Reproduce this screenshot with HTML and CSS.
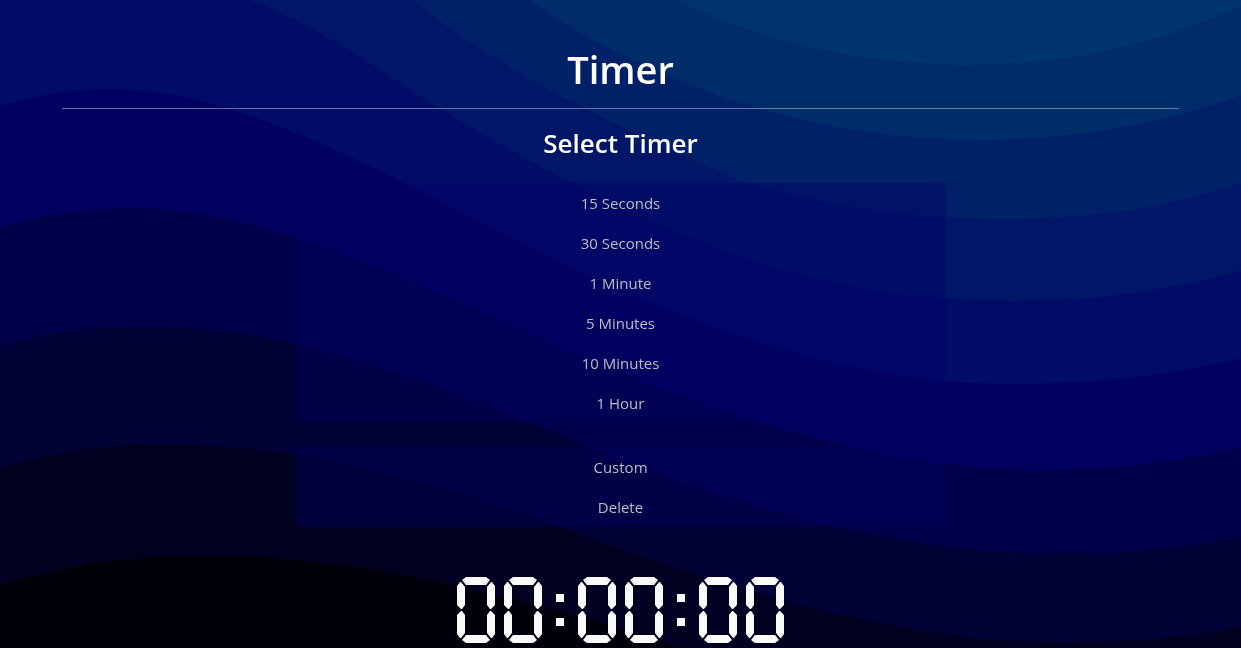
FILE: index.html
```html
<!DOCTYPE html>
<html lang="en">
<head>
<meta charset="utf-8">
<title>Timer</title>
<link rel="stylesheet" href="styles.css">
</head>
<body>
<svg class="waves" viewBox="0 0 1241 648" preserveAspectRatio="none" aria-hidden="true">
  <rect class="wave-0" width="1241" height="648"/>
  <path class="wave-1" d="M0 0H675C770 45 870 65 970 65C1060 65 1150 48 1241 6V648H0Z"/>
  <path class="wave-2" d="M0 0H530C600 50 670 78 740 103C820 128 900 140 980 140C1070 140 1160 125 1241 95V648H0Z"/>
  <path class="wave-3" d="M0 0H412C500 70 620 130 740 180C830 208 920 219 1005 219C1090 219 1170 208 1241 183V648H0Z"/>
  <path class="wave-4" d="M0 0H250C300 20 350 48 410 90C540 172 650 225 740 256C830 287 920 301 1010 301C1090 301 1170 292 1241 270V648H0Z"/>
  <path class="wave-5" d="M0 106C35 96 70 89 110 89C240 89 390 177 500 232C680 325 850 384 1010 384C1090 384 1170 376 1241 358V648H0Z"/>
  <path class="wave-6" d="M0 228C40 215 85 208 130 208C260 208 410 280 540 338C720 418 880 470 1040 470C1110 470 1180 462 1241 447V648H0Z"/>
  <path class="wave-7" d="M0 346C45 333 90 326 140 326C290 326 430 380 590 448C750 512 910 554 1060 554C1130 554 1190 548 1241 536V648H0Z"/>
  <path class="wave-8" d="M0 468C50 452 105 444 160 444C320 444 470 492 620 549C780 604 920 642 1060 642C1130 642 1190 637 1241 627V648H0Z"/>
  <path class="wave-9" d="M0 585C65 565 130 555 200 555C370 555 540 602 680 648H0Z"/>
</svg>
<main class="page">
  <h1 class="title">Timer</h1>
  <hr class="rule">
  <h2 class="subtitle">Select Timer</h2>
  <div class="menus">
    <div class="menu">
      <button class="item" type="button">15 Seconds</button>
      <button class="item" type="button">30 Seconds</button>
      <button class="item" type="button">1 Minute</button>
      <button class="item" type="button">5 Minutes</button>
      <button class="item" type="button">10 Minutes</button>
      <button class="item" type="button">1 Hour</button>
    </div>
    <div class="menu">
      <button class="item" type="button">Custom</button>
      <button class="item" type="button">Delete</button>
    </div>
  </div>
  <div class="clock" role="timer" aria-label="00:00:00">
    <div class="pair">
      <div class="digit"><i class="seg top"></i><i class="seg side"></i><i class="seg side right"></i><i class="seg side low"></i><i class="seg side low right"></i><i class="seg bottom"></i></div>
      <div class="digit"><i class="seg top"></i><i class="seg side"></i><i class="seg side right"></i><i class="seg side low"></i><i class="seg side low right"></i><i class="seg bottom"></i></div>
    </div>
    <div class="colon"><i class="dot"></i><i class="dot"></i></div>
    <div class="pair">
      <div class="digit"><i class="seg top"></i><i class="seg side"></i><i class="seg side right"></i><i class="seg side low"></i><i class="seg side low right"></i><i class="seg bottom"></i></div>
      <div class="digit"><i class="seg top"></i><i class="seg side"></i><i class="seg side right"></i><i class="seg side low"></i><i class="seg side low right"></i><i class="seg bottom"></i></div>
    </div>
    <div class="colon"><i class="dot"></i><i class="dot"></i></div>
    <div class="pair">
      <div class="digit"><i class="seg top"></i><i class="seg side"></i><i class="seg side right"></i><i class="seg side low"></i><i class="seg side low right"></i><i class="seg bottom"></i></div>
      <div class="digit"><i class="seg top"></i><i class="seg side"></i><i class="seg side right"></i><i class="seg side low"></i><i class="seg side low right"></i><i class="seg bottom"></i></div>
    </div>
  </div>
</main>
</body>
</html>
```
FILE: styles.css
```css
* { box-sizing: border-box; }

body {
  margin: 0;
  background: #00000c;
  color: #fff;
  font-family: "Segoe UI", "Open Sans", "Noto Sans", sans-serif;
}

/* Layered wave backdrop */
.waves {
  position: fixed;
  inset: 0;
  width: 100%;
  height: 100%;
  z-index: -1;
}
.wave-0 { fill: #00346c; }
.wave-1 { fill: #002c6a; }
.wave-2 { fill: #002168; }
.wave-3 { fill: #001767; }
.wave-4 { fill: #000c66; }
.wave-5 { fill: #00015e; }
.wave-6 { fill: #00004a; }
.wave-7 { fill: #010136; }
.wave-8 { fill: #000021; }
.wave-9 { fill: #00000d; }

.page {
  display: flex;
  flex-direction: column;
  padding: 40px 5% 4px;
}

.title {
  margin: 0;
  font-size: 38px;
  line-height: 58px;
  font-weight: 600;
  text-align: center;
}

.rule {
  width: 100%;
  height: 1px;
  margin: 10px 0 16px;
  border: 0;
  background: rgba(255, 255, 255, 0.4);
}

.subtitle {
  margin: 0 0 22px;
  font-size: 26px;
  line-height: 36px;
  font-weight: 600;
  text-align: center;
}

.menus {
  display: grid;
  gap: 24px;
  width: 100%;
  max-width: 650px;
  margin: 0 auto 50px;
}

.menu {
  display: flex;
  flex-direction: column;
  border-radius: 5px;
  background: rgba(0, 0, 102, 0.4);
  overflow: hidden;
}

.item {
  height: 40px;
  padding: 0;
  border: 0;
  background: none;
  color: #bdbdbd;
  font: inherit;
  font-size: 15px;
  cursor: pointer;
}

/* Seven-segment clock */
.clock {
  display: flex;
  justify-content: center;
  gap: 14px;
}
.pair { display: flex; gap: 9px; }

.digit {
  display: grid;
  grid-template-columns: 8px 8px;
  grid-template-rows: 5px 27px 2px 27px 5px;
  justify-content: space-between;
  width: 38px;
}
.seg { background: #fafafa; }
.top, .bottom {
  grid-column: 1 / -1;
  justify-self: center;
  width: 28px;
  height: 8px;
}
.top {
  grid-row: 1;
  clip-path: polygon(4px 0, 24px 0, 28px 3px, 24px 8px, 4px 8px, 0 3px);
}
.bottom {
  grid-row: 5;
  align-self: end;
  clip-path: polygon(4px 0, 24px 0, 28px 5px, 24px 8px, 4px 8px, 0 5px);
}
.side {
  grid-row: 2;
  grid-column: 1;
  clip-path: polygon(3px 0, 4px 0, 8px 5px, 8px 23px, 5px 27px, 4px 27px, 0 23px, 0 4px);
}
.low {
  grid-row: 4;
  clip-path: polygon(4px 0, 5px 0, 8px 4px, 8px 22px, 4px 27px, 3px 27px, 0 23px, 0 4px);
}
.right { grid-column: 2; transform: scaleX(-1); }

.colon {
  display: grid;
  align-content: center;
  gap: 16px;
  width: 8px;
}
.dot { height: 8px; background: #fafafa; }
```
